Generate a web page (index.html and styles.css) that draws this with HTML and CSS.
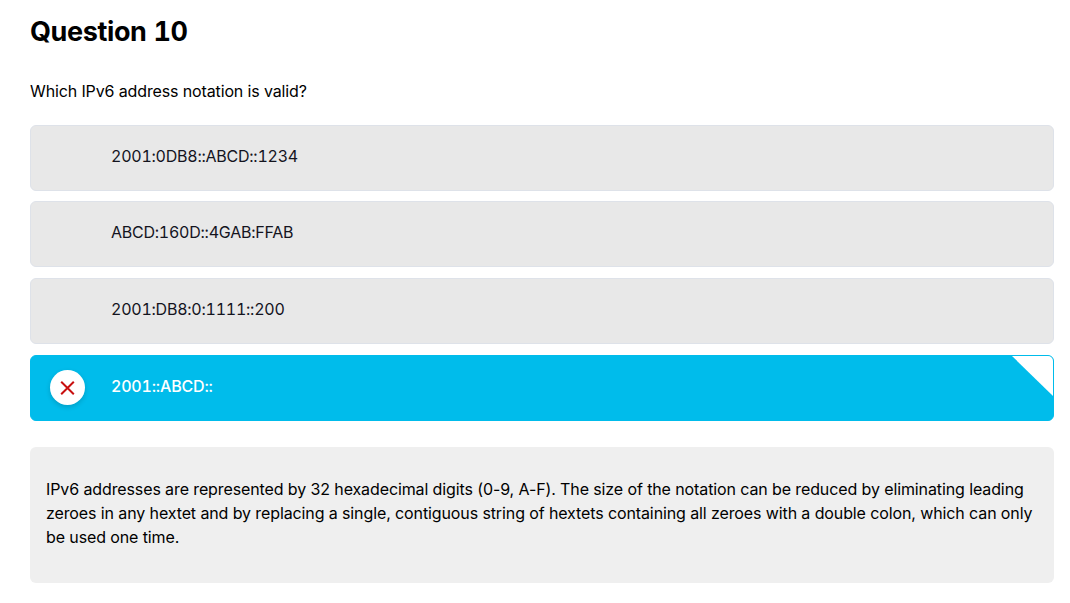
FILE: index.html
```html
<!DOCTYPE html>
<html lang="en">
<head>
  <meta charset="UTF-8"/>
  <meta name="viewport" content="width=device-width, initial-scale=1.0"/>
  <title>Question 10</title>
  <link rel="stylesheet" href="styles.css">
</head>
<body>
  <main class="question">
    <h1>Question 10</h1>
    <p class="prompt">Which IPv6 address notation is valid?</p>

    <ul class="options">
      <li class="option"><span class="mark"></span><span class="label">2001:0DB8::ABCD::1234</span></li>
      <li class="option"><span class="mark"></span><span class="label">ABCD:160D::4GAB:FFAB</span></li>
      <li class="option"><span class="mark"></span><span class="label">2001:DB8:0:1111::200</span></li>
      <li class="option selected">
        <span class="mark wrong">
          <svg width="15" height="15" viewBox="0 0 15 15"><path d="M1.2 1.7 13.8 14.3M13.8 1.7 1.2 14.3"/></svg>
        </span>
        <span class="label">2001::ABCD::</span>
        <svg class="corner" width="41" height="40" viewBox="0 0 41 40"><path d="M0 0H41V40Z"/></svg>
      </li>
    </ul>

    <div class="feedback">
      <p>IPv6 addresses are represented by 32 hexadecimal digits (0-9, A-F). The size of the notation can be reduced by eliminating leading zeroes in any hextet and by replacing a single, contiguous string of hextets containing all zeroes with a double colon, which can only be used one time.</p>
    </div>
  </main>
</body>
</html>
```
FILE: styles.css
```css
body {
  font-family: Inter, "Liberation Sans", sans-serif;
  font-size: 16px;
  line-height: 24px;
  color: #000;
  background: #fff;
  margin: 0;
}
.question {
  padding: 14px 16px 20px 30px;
}
h1 {
  margin: 0;
  font-size: 27px;
  line-height: 36px;
  font-weight: 700;
  font-variant-numeric: tabular-nums;
  letter-spacing: -0.38px;
}
.prompt {
  margin: 29px 0 21.7px;
  letter-spacing: -0.13px;
}
.options {
  list-style: none;
  margin: 0;
  padding: 0;
  display: flex;
  flex-direction: column;
  gap: 10.67px;
}
.option {
  position: relative;
  display: flex;
  align-items: center;
  box-sizing: border-box;
  height: 66px;
  padding: 0 19px;
  background: #e8e8e8;
  border: 1px solid #dee2e9;
  border-radius: 6px;
  color: #14141e;
  overflow: hidden;
}
.label {
  margin: -4px 0 0 26px;
  font-variant-numeric: tabular-nums;
  letter-spacing: -0.24px;
}
.mark {
  display: flex;
  align-items: center;
  justify-content: center;
  width: 35px;
  height: 35px;
}
.selected {
  background: #00bceb;
  border-color: #00bceb;
  color: #fff;
}
.selected .label {
  font-weight: 500;
  letter-spacing: -0.18px;
}
.wrong {
  background: #fff;
  border-radius: 50%;
  box-shadow: 0 2px 5px rgba(0, 0, 0, 0.16);
}
.wrong path {
  fill: none;
  stroke: #c80f0f;
  stroke-width: 2;
}
/* folded corner, sits over the option background */
.corner {
  position: absolute;
  top: 0;
  right: 0;
  fill: #fff;
}
.feedback {
  margin-top: 26px;
  padding: 30px 16px 34px;
  background: #efefef;
  border-radius: 6px;
}
.feedback p {
  margin: 0;
  letter-spacing: -0.11px;
}
```
